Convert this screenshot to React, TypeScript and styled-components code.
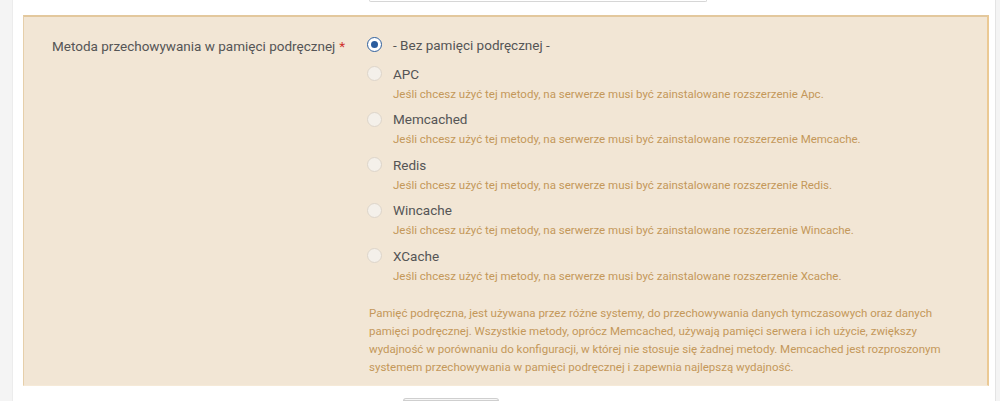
import React from 'react'
import styled, { createGlobalStyle } from 'styled-components'

const GlobalStyle = createGlobalStyle`
  html, body {
    margin: 0;
    padding: 0;
    background: #ffffff;
  }
  body {
    font-family: Roboto, "Liberation Sans", Arial, sans-serif;
  }
`

const Page = styled.div`
  display: flex;
  width: 1000px;
  height: 401px;
  overflow: hidden;
`

const Gutter = styled.div<{ side: 'left' | 'right' }>`
  flex: 0 0 ${p => (p.side === 'left' ? '12px' : '4px')};
  background: #f4f4f4;
  ${p => (p.side === 'left' ? 'border-right: 1px solid #ececec;' : 'border-left: 1px solid #e4e4e4;')}
`

const Main = styled.div`
  flex: 1;
  background: #fff;
  padding: 0 6px 0 10px;
  display: flex;
  flex-direction: column;
`

const PrevInput = styled.div`
  margin-left: 346px;
  width: 336px;
  height: 3px;
  border: 1px solid #d6d6d6;
  border-top: none;
  border-radius: 0 0 3px 3px;
  background: #fff;
`

const Panel = styled.div`
  margin-top: 13px;
  background: #f2e6d5;
  border: 1px solid #e6cfaa;
  border-top: 2px solid #e3c89d;
  border-right: 2px solid #ebc994;
  border-bottom-color: #f6ead8;
  display: grid;
  grid-template-columns: 343px 1fr;
  padding: 19px 0 11px;
  height: 371px;
  box-sizing: border-box;
`

const Label = styled.div`
  padding-left: 28px;
  font-size: 13.5px;
  line-height: 20px;
  color: #555;
`

const Required = styled.span`
  color: #d0312d;
  margin-left: 4px;
`

const Controls = styled.div`
  display: flex;
  flex-direction: column;
`

const Option = styled.div<{ first?: boolean }>`
  margin-bottom: ${p => (p.first ? '11px' : '7.5px')};
`

const OptionRow = styled.label`
  display: flex;
  align-items: center;
  gap: 11px;
  font-size: 13.5px;
  line-height: 18px;
  color: #555;
`

const Radio = styled.span<{ checked?: boolean }>`
  width: 15px;
  height: 15px;
  box-sizing: border-box;
  border-radius: 50%;
  flex: 0 0 15px;
  display: flex;
  align-items: center;
  justify-content: center;
  background: ${p => (p.checked ? '#fff' : '#f4f0ea')};
  border: ${p => (p.checked ? '1.5px solid #2f5f9c' : '1px solid #ddd5ca')};
  &::after {
    content: '';
    display: ${p => (p.checked ? 'block' : 'none')};
    width: 7px;
    height: 7px;
    border-radius: 50%;
    background: #2b5d9e;
  }
`

const Description = styled.div`
  margin-top: 2px;
  padding-left: 26px;
  font-size: 11.5px;
  line-height: 18px;
  color: #c4985a;
`

const Help = styled.p`
  margin: 12px 0 0 2px;
  width: 590px;
  font-size: 11.5px;
  line-height: 18px;
  color: #c4985a;
`

const NextButton = styled.div`
  margin: 12px 0 0 380px;
  width: 94px;
  height: 6px;
  border: 1px solid #cfcfcf;
  border-radius: 3px 3px 0 0;
  background: #f7f7f7;
`

const options = [
  { name: 'APC', ext: 'Apc' },
  { name: 'Memcached', ext: 'Memcache' },
  { name: 'Redis', ext: 'Redis' },
  { name: 'Wincache', ext: 'Wincache' },
  { name: 'XCache', ext: 'Xcache' },
]

const App = () => {
  return (
    <Page>
      <GlobalStyle />
      <Gutter side="left" />
      <Main>
        <PrevInput />
        <Panel>
          <Label>
            Metoda przechowywania w pamięci podręcznej<Required>*</Required>
          </Label>
          <Controls>
            <Option first>
              <OptionRow>
                <Radio checked />
                - Bez pamięci podręcznej -
              </OptionRow>
            </Option>
            {options.map(o => (
              <Option key={o.name}>
                <OptionRow>
                  <Radio />
                  {o.name}
                </OptionRow>
                <Description>
                  Jeśli chcesz użyć tej metody, na serwerze musi być zainstalowane rozszerzenie {o.ext}.
                </Description>
              </Option>
            ))}
            <Help>
              Pamięć podręczna, jest używana przez różne systemy, do przechowywania danych tymczasowych oraz danych
              pamięci podręcznej. Wszystkie metody, oprócz Memcached, używają pamięci serwera i ich użycie, zwiększy
              wydajność w porównaniu do konfiguracji, w której nie stosuje się żadnej metody. Memcached jest rozproszonym
              systemem przechowywania w pamięci podręcznej i zapewnia najlepszą wydajność.
            </Help>
          </Controls>
        </Panel>
        <NextButton />
      </Main>
      <Gutter side="right" />
    </Page>
  )
}

export default App
